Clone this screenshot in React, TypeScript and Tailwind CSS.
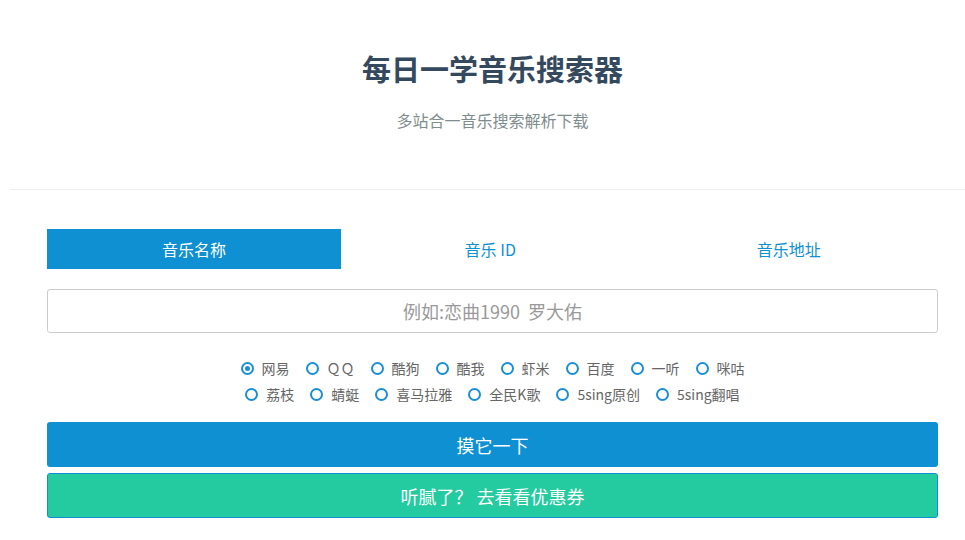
import { useState } from "react";

const tabs = ["音乐名称", "音乐 ID", "音乐地址"];

const sites = [
  ["网易", "ＱＱ", "酷狗", "酷我", "虾米", "百度", "一听", "咪咕"],
  ["荔枝", "蜻蜓", "喜马拉雅", "全民K歌", "5sing原创", "5sing翻唱"],
];

const App = () => {
  const [tab, setTab] = useState(0);
  const [site, setSite] = useState("网易");

  return (
    <div
      className="w-[965px] min-h-[540px] bg-white pl-[10px]"
      style={{ fontFamily: '"Microsoft YaHei", "Noto Sans CJK SC", "Liberation Sans", sans-serif' }}
    >
      <div className="w-[965px]">
        <header className="pt-[45px] pb-[57px] text-center">
          <h1 className="text-[29px] leading-[47px] font-bold text-[#34495e]">每日一学音乐搜索器</h1>
          <p className="mt-4 text-base leading-6 text-[#7f8c8d]">多站合一音乐搜索解析下载</p>
        </header>
        <div className="h-px bg-[#eeeeee]" />

        <div className="px-[37px] pt-[39px]">
          <div className="grid grid-cols-[294px_1fr_1fr] h-10">
            {tabs.map((t, i) => (
              <button
                key={t}
                onClick={() => setTab(i)}
                className={
                  i === tab
                    ? "bg-[#0f90d2] text-white text-base"
                    : "bg-white text-[#0f90d2] text-base"
                }
              >
                {t}
              </button>
            ))}
          </div>

          <input
            className="mt-5 block w-full h-[44px] border border-[#cccccc] rounded-[3px] text-center text-lg text-[#555] placeholder:text-[#999999] outline-none"
            placeholder="例如:恋曲1990  罗大佑"
          />

          <div className="mt-[22px] flex flex-col items-center">
            {sites.map((row, r) => (
              <div key={r} className="flex h-[26px] items-center gap-4">
                {row.map((s) => (
                  <label
                    key={s}
                    onClick={() => setSite(s)}
                    className="flex items-center gap-2 text-sm text-[#666666] cursor-pointer"
                  >
                    <span className="flex items-center justify-center w-[13px] h-[13px] rounded-full border-2 border-[#1a8fd6]">
                      {site === s && <span className="w-[5px] h-[5px] rounded-full bg-[#1a8fd6]" />}
                    </span>
                    {s}
                  </label>
                ))}
              </div>
            ))}
          </div>

          <button className="mt-[15px] block w-full h-[45px] rounded-[3px] bg-[#0f90d2] text-white text-lg">
            摸它一下
          </button>
          <button className="mt-[6px] block w-full h-[45px] rounded-[3px] bg-[#25cba0] border border-[#0f90d2] text-white text-lg">
            听腻了？ 去看看优惠券
          </button>
        </div>
      </div>
    </div>
  );
};

export default App;
